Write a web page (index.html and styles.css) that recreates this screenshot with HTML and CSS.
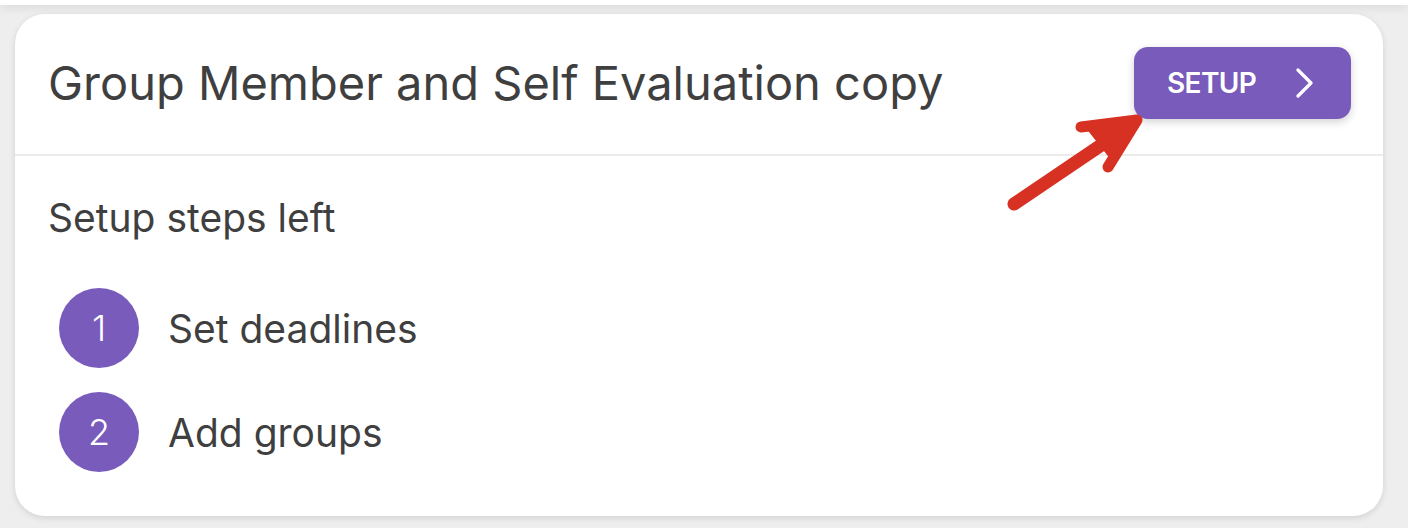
FILE: index.html
```html
<!DOCTYPE html>
<html>
<head>
<meta charset="utf-8">
<link rel="stylesheet" href="styles.css">
</head>
<body>
<div class="topbar"></div>
<main class="page">
  <section class="card">
    <header class="card-head">
      <h1 class="title">Group Member and Self Evaluation copy</h1>
      <button class="setup-btn">
        <span class="setup-label">SETUP</span>
        <svg class="chev" width="18" height="30" viewBox="0 0 18 30"><path d="M3 2 L16 15 L3 28" fill="none" stroke="#fff" stroke-width="3.2" stroke-linecap="round" stroke-linejoin="round"/></svg>
      </button>
    </header>
    <div class="card-body">
      <h2 class="subtitle">Setup steps left</h2>
      <ol class="steps">
        <li class="step"><span class="num">1</span><span class="step-text">Set deadlines</span></li>
        <li class="step"><span class="num">2</span><span class="step-text">Add groups</span></li>
      </ol>
    </div>
  </section>
</main>
<svg class="arrow" width="1408" height="528" viewBox="0 0 1408 528">
  <line x1="1014" y1="204" x2="1122" y2="131" stroke="#d63122" stroke-width="13" stroke-linecap="round"/>
  <path d="M1081 127 L1137 120 L1108 167" fill="none" stroke="#d63122" stroke-width="11" stroke-linecap="round" stroke-linejoin="round"/>
  <path d="M1137 120 L1090 130 L1112 158 Z" fill="#d63122" stroke="#d63122" stroke-width="4" stroke-linejoin="round"/>
</svg>
</body>
</html>
```
FILE: styles.css
```css
* { box-sizing: border-box; }
html, body { margin: 0; padding: 0; }
body {
  background: #eeeeee;
  font-family: "Inter", "Noto Sans", sans-serif;
  color: #3f3f3f;
  width: 1408px;
  height: 528px;
  overflow: hidden;
  position: relative;
}
.topbar {
  height: 5px;
  background: #ffffff;
  box-shadow: 0 2px 10px rgba(0,0,0,0.12);
  position: relative;
  z-index: 1;
}
.page {
  padding: 9px 25px 0 15px;
}
.card {
  background: #ffffff;
  border-radius: 30px;
  height: 502px;
  box-shadow: 0 2px 6px rgba(0,0,0,0.12);
  overflow: hidden;
}
.card-head {
  height: 142px;
  border-bottom: 2px solid #ececec;
  display: flex;
  align-items: center;
  justify-content: space-between;
  padding: 0 32px 0 33px;
}
.title {
  margin: 0;
  font-weight: 400;
  font-size: 47px;
  letter-spacing: 0;
  color: #3f3f3f;
  padding-bottom: 3px;
}
.setup-btn {
  width: 217px;
  height: 72px;
  margin-top: -2px;
  border: none;
  border-radius: 14px;
  background: #795bbb;
  box-shadow: 0 3px 8px rgba(0,0,0,0.18);
  display: flex;
  align-items: center;
  padding: 0 38px 0 33px;
  justify-content: space-between;
  font-family: "Inter", "Noto Sans", sans-serif;
}
.setup-label {
  color: #ffffff;
  font-size: 28px;
  font-weight: 600;
  letter-spacing: -0.6px;
}
.chev { display: block; }
.card-body {
  padding: 40px 33px 0 33px;
}
.subtitle {
  margin: 0;
  font-size: 39px;
  font-weight: 400;
  color: #3f3f3f;
  line-height: 44px;
}
.steps {
  list-style: none;
  margin: 48px 0 0 11px;
  padding: 0;
  display: flex;
  flex-direction: column;
  gap: 24px;
}
.step {
  display: flex;
  align-items: center;
  gap: 29px;
}
.num {
  width: 80px;
  height: 80px;
  border-radius: 50%;
  background: #795bbb;
  color: #ffffff;
  font-size: 36px;
  font-weight: 300;
  display: flex;
  align-items: center;
  justify-content: center;
}
.step-text {
  font-size: 39px;
  color: #3f3f3f;
}
.arrow {
  position: absolute;
  left: 0;
  top: 0;
  pointer-events: none;
}
```
